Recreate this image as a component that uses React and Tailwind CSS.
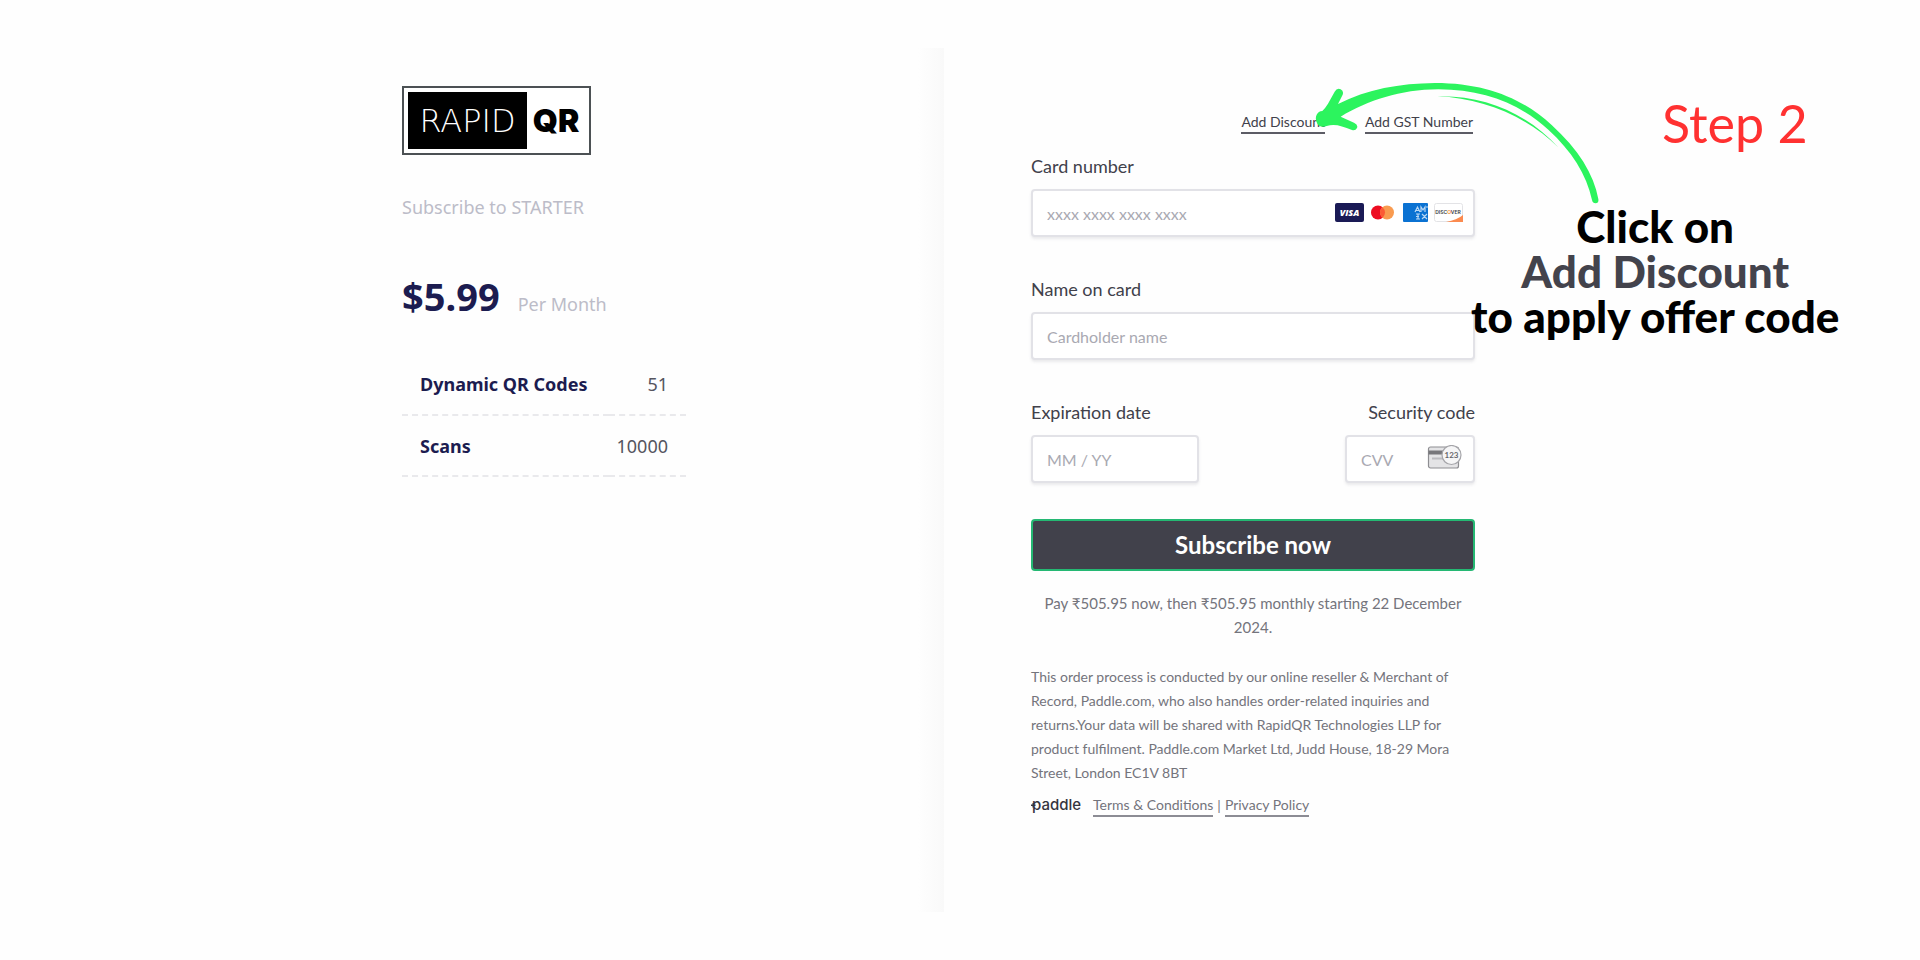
const FIELD =
    "w-full h-12 rounded border-2 border-[#e2e2e7] bg-white px-3.5 text-base text-[#41414b] shadow-[0_2px_3px_rgba(60,60,80,0.1)] outline-none placeholder:text-[#a9a9b2]";

const PLAN_ROWS = [
    { name: "Dynamic QR Codes", value: "51" },
    { name: "Scans", value: "10000" },
];

const Logo = () => (
    <div className="flex w-[189px] h-[69px] border-2 border-[#4c5154] bg-white p-1 text-[32px] leading-none text-black font-[Inter,sans-serif]">
        <span className="flex w-[119px] items-center justify-center bg-black font-extralight text-white font-['DejaVu_Sans',sans-serif]">RAPID</span>
        <span className="flex flex-1 items-center justify-center font-black">QR</span>
    </div>
);

const CardBrands = () => (
    <svg className="pointer-events-none absolute right-3 top-3.5 h-5 w-32" viewBox="0 0 128 20" aria-hidden="true">
        <rect width="29" height="19" rx="2" fill="#1a1a55" />
        <text x="14.5" y="13" fill="#fff" fontFamily="Open Sans, sans-serif" fontSize="9" fontStyle="italic" fontWeight="800" textAnchor="middle">VISA</text>
        <circle cx="43" cy="9.5" r="7" fill="#ed0c22" />
        <circle cx="52" cy="9.5" r="7" fill="#f99b50" />
        <path d="M47.5 4.2a7 7 0 0 1 0 10.7a7 7 0 0 1 0-10.7z" fill="#fb5a35" />
        <rect x="68" width="25" height="19" rx="1" fill="#0b72d2" />
        <g fill="none" stroke="#b9d8f5" strokeWidth="1.2">
            <path d="M80 9l2.500-5 2.500 5M81 7.500h3M86 9V4l2 3 2-3v5M93 4h-2M81 11h4M83 11v5M81 16h4M81 13.500h3M87 11l5 5M92 11l-5 5" />
        </g>
        <rect x="99.5" y="0.5" width="28" height="18" rx="2" fill="#fff" stroke="#e3e3e6" />
        <path d="M128 12v7h-17q11-2 17-7z" fill="#fb8b50" />
        <text x="113" y="11" fill="#3a3a40" fontFamily="Inter, sans-serif" fontSize="5" fontWeight="600" textAnchor="middle">
            DISC<tspan fill="#f58220">O</tspan>VER
        </text>
    </svg>
);

const CvvIcon = () => (
    <svg className="pointer-events-none absolute right-3 top-2.5 h-6 w-9" viewBox="0 0 36 24" fill="none" aria-hidden="true">
        <rect x="1.5" y="2" width="30" height="21" rx="2" fill="#e4e4e6" stroke="#8e8e92" strokeWidth="1.2" />
        <path d="M1.500 5.500h30v4h-30z" fill="#77777b" />
        <path d="M5 13.500h11" stroke="#bcbcc0" strokeWidth="2" />
        <circle cx="24.5" cy="10" r="9.5" fill="#f6f6f7" stroke="#a5a5a9" strokeWidth="1.2" />
        <text x="24.5" y="12.5" fill="#66666b" fontFamily="Lato, sans-serif" fontSize="8" fontWeight="700" textAnchor="middle">123</text>
    </svg>
);

const PaddleLogo = () => (
    <svg className="h-5 w-[50px]" viewBox="0 0 50 20" fill="#35353f" aria-hidden="true">
        <path d="M0 8.500h1.500V7h1.500v1.500h1.500v1.500H3v1.500H1.500v-1.500H0z" />
        <text x="1" y="14" fontFamily="Inter, sans-serif" fontSize="15" fontWeight="500">paddle</text>
    </svg>
);

const Arrow = () => (
    <svg className="pointer-events-none absolute left-[279px] -top-[34px] h-[130px] w-[300px]" viewBox="270 21 900 390" fill="#2cf45e" aria-hidden="true">
        <path d="M324 98L344 62Q351 50 362 55Q372 60 368 71L354 99C440 55 540 37 645 36C800 36 910 84 995 162C1075 235 1122 310 1135 384Q1137 396 1127 397Q1118 397 1116 387C1100 310 1055 240 985 176C900 98 790 55 655 55C540 56 445 88 362 137L402 155Q415 161 411 171Q406 180 396 177C365 165 345 158 320 165Q300 171 292 158Q284 144 290 131Q295 121 307 120Q316 111 324 98Z" />
        <path d="M652 76C790 72 920 125 1016 230C920 136 790 82 652 76Z" />
    </svg>
);

const Summary = () => (
    <section className="flex justify-end pt-[38px] pr-[258px] text-lg bg-linear-to-l from-[#f9f9f9] to-[#fefefe] to-[26px] font-['Noto_Sans',sans-serif]">
        <div className="w-[284px]">
            <Logo />
            <p className="mt-[38px] text-[#bcbcc8]">Subscribe to STARTER</p>
            <div className="mt-[46px] flex items-baseline gap-[18px]">
                <span className="text-[38px] font-bold text-[#1c1c50]">$5.99</span>
                <span className="text-[#bcbcc8]">Per Month</span>
            </div>
            <table className="mt-7 w-full">
                <tbody>
                    {PLAN_ROWS.map((row) => (
                        <tr key={row.name} className="h-[61px] border-b-2 border-dashed border-[#e9e9ec]">
                            <th scope="row" className="pl-[18px] text-left font-bold text-[#1c1c50]">{row.name}</th>
                            <td className="pr-[18px] text-right text-[#55555f]">{row.value}</td>
                        </tr>
                    ))}
                </tbody>
            </table>
        </div>
    </section>
);

const Checkout = () => (
    <section className="pt-16 pl-[87px]">
        <div className="relative w-[444px]">
            <div className="flex justify-end gap-10 pr-0.5 text-sm text-[#41414b]">
                <a href="#discount" className="border-b-2 border-[#5c5c65]">Add Discount</a>
                <a href="#gst" className="border-b-2 border-[#5c5c65]">Add GST Number</a>
            </div>

            <form className="mt-[18px] text-lg text-[#41414b]">
                <label htmlFor="card-number">Card number</label>
                <div className="relative mt-[9px]">
                    <input id="card-number" className={FIELD} placeholder="xxxx xxxx xxxx xxxx" />
                    <CardBrands />
                </div>

                <div className="mt-[38px]">
                    <label htmlFor="card-name">Name on card</label>
                    <input id="card-name" className={`${FIELD} mt-[9px]`} placeholder="Cardholder name" />
                </div>

                <div className="mt-[38px] flex justify-between">
                    <div className="w-[168px]">
                        <label htmlFor="expiry">Expiration date</label>
                        <input id="expiry" className={`${FIELD} mt-[9px]`} placeholder="MM / YY" />
                    </div>
                    <div className="w-[130px]">
                        <label htmlFor="cvv" className="block text-right">Security code</label>
                        <div className="relative mt-[9px]">
                            <input id="cvv" className={FIELD} placeholder="CVV" />
                            <CvvIcon />
                        </div>
                    </div>
                </div>

                <button type="submit" className="mt-9 h-[52px] w-full rounded border-2 border-[#25b873] bg-[#41414b] text-2xl font-bold text-white">
                    Subscribe now
                </button>
            </form>

            <p className="mt-5 text-center text-[15px] leading-6 text-[#74747c]">
                Pay ₹505.95 now, then ₹505.95 monthly starting 22 December 2024.
            </p>
            <p className="mt-[26px] text-sm leading-6 text-[#74747c]">
                This order process is conducted by our online reseller &amp; Merchant of Record, Paddle.com, who also
                handles order-related inquiries and returns.Your data will be shared with RapidQR Technologies LLP for
                product fulfilment. Paddle.com Market Ltd, Judd House, 18-29 Mora Street, London EC1V 8BT
            </p>
            <div className="mt-2.5 flex items-center text-sm text-[#74747c]">
                <PaddleLogo />
                <a href="#terms" className="ml-3 border-b-2 border-[#8c8c94]">Terms &amp; Conditions</a>
                <span className="mx-1">|</span>
                <a href="#privacy" className="border-b-2 border-[#8c8c94]">Privacy Policy</a>
            </div>

            <Arrow />
            <p className="absolute left-[631px] -top-7 whitespace-nowrap text-[52px] text-[#ff3131]">Step 2</p>
            <div className="absolute left-[440px] top-[92px] whitespace-nowrap text-center text-[44px] leading-[45px] font-black text-black">
                <p>Click on</p>
                <p className="text-[#43434c]">Add Discount</p>
                <p>to apply offer code</p>
            </div>
        </div>
    </section>
);

export default function App() {
    return (
        <main className="min-h-screen overflow-hidden bg-[#fefefe] py-12 font-[Lato,sans-serif]">
            <div className="grid min-h-[calc(100vh-96px)] grid-cols-[59fr_61fr]">
                <Summary />
                <Checkout />
            </div>
        </main>
    );
}
